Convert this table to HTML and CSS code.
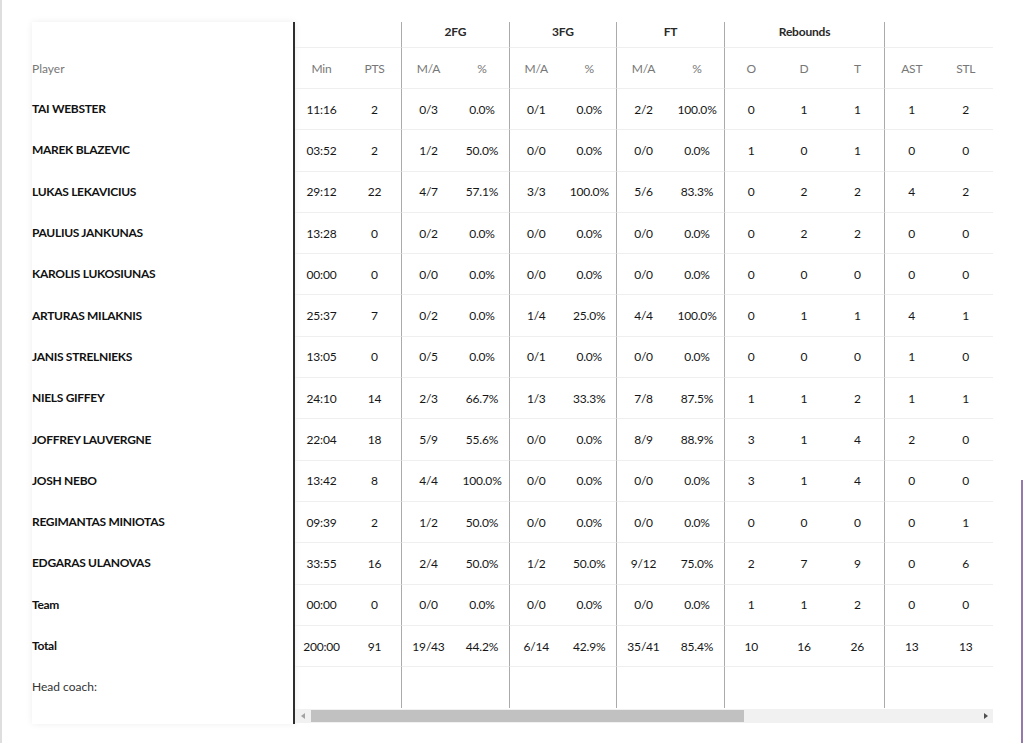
FILE: index.html
```html
<!DOCTYPE html>
<html lang="en">
<head>
<meta charset="utf-8">
<title>Box score</title>
<link rel="stylesheet" href="styles.css">
</head>
<body>
<div class="page">
  <div class="boxscore">
    <aside class="players">
      <div class="p-spacer"></div>
      <div class="p-head">Player</div>
      <div class="p-row">TAI WEBSTER</div>
      <div class="p-row">MAREK BLAZEVIC</div>
      <div class="p-row">LUKAS LEKAVICIUS</div>
      <div class="p-row">PAULIUS JANKUNAS</div>
      <div class="p-row">KAROLIS LUKOSIUNAS</div>
      <div class="p-row">ARTURAS MILAKNIS</div>
      <div class="p-row">JANIS STRELNIEKS</div>
      <div class="p-row">NIELS GIFFEY</div>
      <div class="p-row">JOFFREY LAUVERGNE</div>
      <div class="p-row">JOSH NEBO</div>
      <div class="p-row">REGIMANTAS MINIOTAS</div>
      <div class="p-row">EDGARAS ULANOVAS</div>
      <div class="p-row">Team</div>
      <div class="p-row">Total</div>
      <div class="p-coach">Head coach:</div>
    </aside>
    <section class="stats">
      <div class="stats-view">
        <div class="grid">
          <div class="groups">
            <span class="span2"></span>
            <span class="span2 g">2FG</span>
            <span class="span2 g">3FG</span>
            <span class="span2 g">FT</span>
            <span class="span3 g">Rebounds</span>
            <span class="span2 g"></span>
          </div>
          <div class="row head"><span>Min</span><span>PTS</span><span>M/A</span><span>%</span><span>M/A</span><span>%</span><span>M/A</span><span>%</span><span>O</span><span>D</span><span>T</span><span>AST</span><span>STL</span></div>
          <div class="row"><span>11:16</span><span>2</span><span>0/3</span><span>0.0%</span><span>0/1</span><span>0.0%</span><span>2/2</span><span>100.0%</span><span>0</span><span>1</span><span>1</span><span>1</span><span>2</span></div>
          <div class="row"><span>03:52</span><span>2</span><span>1/2</span><span>50.0%</span><span>0/0</span><span>0.0%</span><span>0/0</span><span>0.0%</span><span>1</span><span>0</span><span>1</span><span>0</span><span>0</span></div>
          <div class="row"><span>29:12</span><span>22</span><span>4/7</span><span>57.1%</span><span>3/3</span><span>100.0%</span><span>5/6</span><span>83.3%</span><span>0</span><span>2</span><span>2</span><span>4</span><span>2</span></div>
          <div class="row"><span>13:28</span><span>0</span><span>0/2</span><span>0.0%</span><span>0/0</span><span>0.0%</span><span>0/0</span><span>0.0%</span><span>0</span><span>2</span><span>2</span><span>0</span><span>0</span></div>
          <div class="row"><span>00:00</span><span>0</span><span>0/0</span><span>0.0%</span><span>0/0</span><span>0.0%</span><span>0/0</span><span>0.0%</span><span>0</span><span>0</span><span>0</span><span>0</span><span>0</span></div>
          <div class="row"><span>25:37</span><span>7</span><span>0/2</span><span>0.0%</span><span>1/4</span><span>25.0%</span><span>4/4</span><span>100.0%</span><span>0</span><span>1</span><span>1</span><span>4</span><span>1</span></div>
          <div class="row"><span>13:05</span><span>0</span><span>0/5</span><span>0.0%</span><span>0/1</span><span>0.0%</span><span>0/0</span><span>0.0%</span><span>0</span><span>0</span><span>0</span><span>1</span><span>0</span></div>
          <div class="row"><span>24:10</span><span>14</span><span>2/3</span><span>66.7%</span><span>1/3</span><span>33.3%</span><span>7/8</span><span>87.5%</span><span>1</span><span>1</span><span>2</span><span>1</span><span>1</span></div>
          <div class="row"><span>22:04</span><span>18</span><span>5/9</span><span>55.6%</span><span>0/0</span><span>0.0%</span><span>8/9</span><span>88.9%</span><span>3</span><span>1</span><span>4</span><span>2</span><span>0</span></div>
          <div class="row"><span>13:42</span><span>8</span><span>4/4</span><span>100.0%</span><span>0/0</span><span>0.0%</span><span>0/0</span><span>0.0%</span><span>3</span><span>1</span><span>4</span><span>0</span><span>0</span></div>
          <div class="row"><span>09:39</span><span>2</span><span>1/2</span><span>50.0%</span><span>0/0</span><span>0.0%</span><span>0/0</span><span>0.0%</span><span>0</span><span>0</span><span>0</span><span>0</span><span>1</span></div>
          <div class="row"><span>33:55</span><span>16</span><span>2/4</span><span>50.0%</span><span>1/2</span><span>50.0%</span><span>9/12</span><span>75.0%</span><span>2</span><span>7</span><span>9</span><span>0</span><span>6</span></div>
          <div class="row"><span>00:00</span><span>0</span><span>0/0</span><span>0.0%</span><span>0/0</span><span>0.0%</span><span>0/0</span><span>0.0%</span><span>1</span><span>1</span><span>2</span><span>0</span><span>0</span></div>
          <div class="row"><span>200:00</span><span>91</span><span>19/43</span><span>44.2%</span><span>6/14</span><span>42.9%</span><span>35/41</span><span>85.4%</span><span>10</span><span>16</span><span>26</span><span>13</span><span>13</span></div>
          <div class="row coach"><span></span><span></span><span></span><span></span><span></span><span></span><span></span><span></span><span></span><span></span><span></span><span></span><span></span></div>
        </div>
      </div>
      <div class="scrollbar">
        <span class="arrow arrow-left"></span>
        <div class="track"><div class="thumb"></div></div>
        <span class="arrow arrow-right"></span>
      </div>
    </section>
  </div>
</div>
</body>
</html>
```

FILE: styles.css
```css
* {
  box-sizing: border-box;
}

html,
body {
  margin: 0;
}

html {
  background: #ffffff;
}

body {
  height: 743px;
  overflow: hidden;
  border-left: 2px solid #dedede;
  background: linear-gradient(#9479ad, #9479ad) no-repeat right 1px top 480px / 2px 263px, #ffffff;
  font-family: Lato, "Open Sans", "Liberation Sans", sans-serif;
  font-size: 12px;
  color: #161616;
}

.page {
  padding: 22px 31px 0 30px;
}

.boxscore {
  display: flex;
  align-items: flex-start;
}

/* fixed player column */
.players {
  flex: none;
  width: 263px;
  height: 702px;
  background: #ffffff;
  border-right: 2px solid #2e2e2e;
  box-shadow: 0 0 7px rgba(0, 0, 0, 0.07);
  display: flex;
  flex-direction: column;
}

.p-spacer {
  height: 26px;
}

.p-head {
  height: 40px;
  display: flex;
  align-items: center;
  color: #777777;
}

.p-row {
  height: 41.3px;
  display: flex;
  align-items: center;
  font-weight: 700;
  letter-spacing: -0.3px;
  color: #111111;
}

.p-coach {
  height: 41px;
  display: flex;
  align-items: center;
  color: #333333;
}

/* scrolling stats */
.stats {
  flex: 1;
  min-width: 0;
}

.stats-view {
  overflow: hidden;
}

.grid {
  display: grid;
  grid-template-columns:
    53px 53px
    54px 54px
    53.5px 53.5px
    54px 54px
    53.33px 53.33px 53.34px
    54.5px 54.5px;
  grid-template-rows: 26px 41px repeat(14, 41.3px) 41px;
}

.groups,
.row {
  display: contents;
}

.groups > span,
.row > span {
  display: flex;
  align-items: center;
  justify-content: center;
  border-bottom: 1px solid #efefef;
  white-space: nowrap;
  letter-spacing: -0.2px;
}

.groups > span {
  align-items: flex-start;
  padding-top: 2px;
  font-weight: 700;
  color: #2a2a2a;
}

.span2 {
  grid-column: span 2;
}

.span3 {
  grid-column: span 3;
}

.groups > .g,
.row > span:nth-child(3),
.row > span:nth-child(5),
.row > span:nth-child(7),
.row > span:nth-child(9),
.row > span:nth-child(12) {
  border-left: 1px solid #ababab;
}

.head > span {
  color: #777777;
}

.coach > span {
  border-bottom: 0;
}

/* horizontal scrollbar */
.scrollbar {
  display: flex;
  align-items: center;
  height: 14px;
  margin-top: 1px;
  background: #f1f1f1;
}

.arrow {
  flex: none;
  width: 15px;
  height: 14px;
  display: flex;
  align-items: center;
  justify-content: center;
}

.arrow::before {
  content: "";
  width: 0;
  height: 0;
  border-top: 3.5px solid transparent;
  border-bottom: 3.5px solid transparent;
}

.arrow-left::before {
  border-right: 4px solid #a3a3a3;
}

.arrow-right::before {
  border-left: 4px solid #505050;
}

.track {
  flex: 1;
  height: 14px;
  display: flex;
  align-items: center;
}

.thumb {
  margin-left: 1px;
  width: 433px;
  height: 12px;
  background: #c1c1c1;
}
```
